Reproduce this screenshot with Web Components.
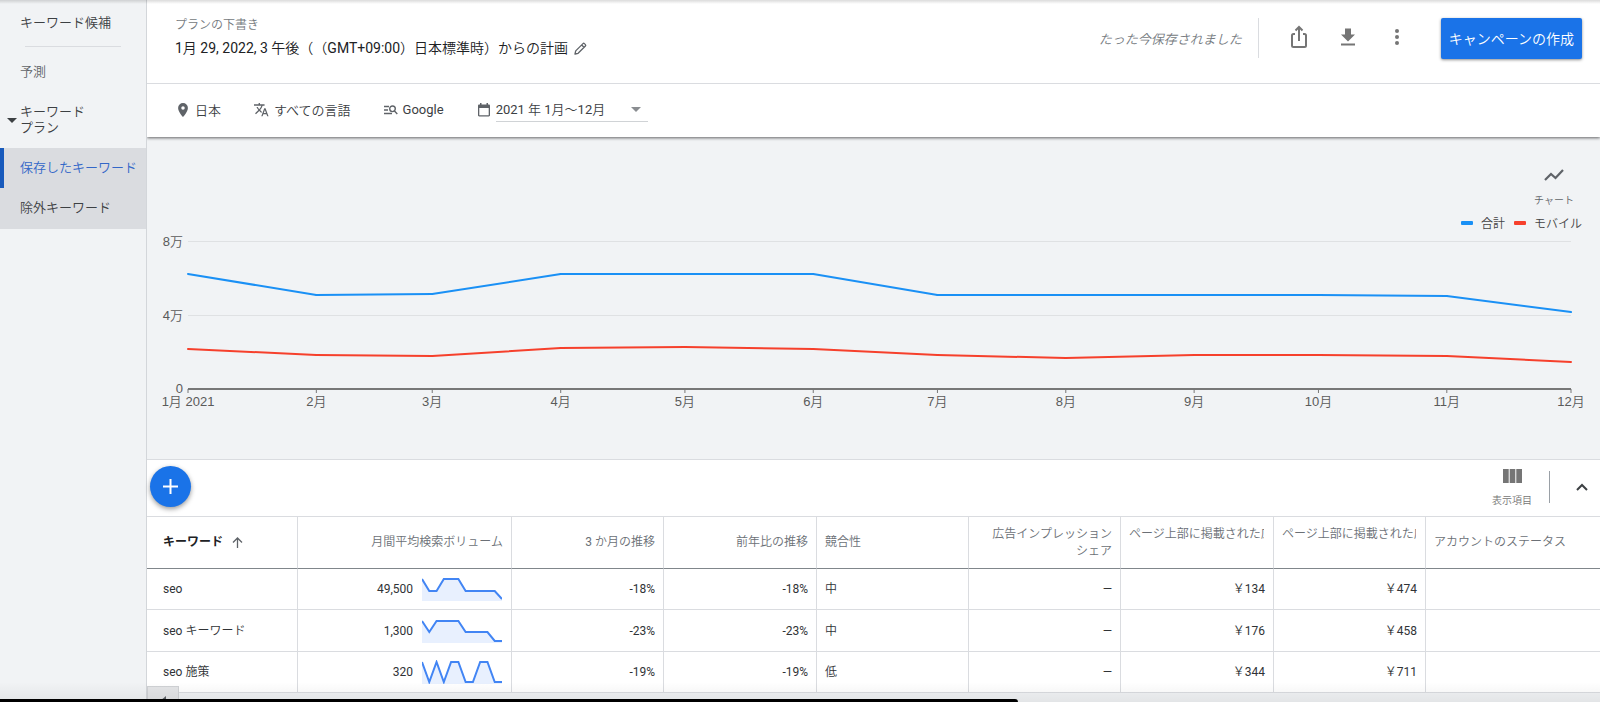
<!DOCTYPE html>
<html lang="ja">
<head>
<meta charset="utf-8">
<title>キーワード プラン</title>
<style>
html, body { margin: 0; height: 100%; }
body {
  font-family: Roboto, "Noto Sans CJK JP DemiLight", "Noto Sans CJK JP Light", "Noto Sans CJK JP", sans-serif;
  text-spacing-trim: space-all;
  font-size: 13px;
  color: #3c4043;
  background: #f1f3f5;
  overflow: hidden;
  --blue: #1a73e8;
  --panel: #f1f3f5;
  --line: #dadce0;
}
</style>
</head>
<body>
<planner-app></planner-app>
<script>
const RESET = `
  *, *::before, *::after { box-sizing: border-box; }
  button { font: inherit; color: inherit; background: none; border: 0; margin: 0; padding: 0; cursor: pointer; }
  a { color: inherit; text-decoration: none; }
`;
function define(name, css, html, extra) {
  const t = document.createElement('template');
  t.innerHTML = `<style>${RESET}${css}</style>${html}`;
  customElements.define(name, class extends HTMLElement {
    connectedCallback() {
      if (this.shadowRoot) return;
      const root = this.attachShadow({ mode: 'open' });
      root.append(t.content.cloneNode(true));
      if (extra) extra(this, root);
    }
  });
}

/* Icons */
const ICONS = {
  pencil: [13, 13, '<path d="M1 12l.7-3.1L9 1.6a1 1 0 0 1 1.400 0l1 1a1 1 0 0 1 0 1.400L4.100 11.300zM7.700 3l2.300 2.300" fill="none" stroke="currentColor" stroke-width="1.300" stroke-linejoin="round"/>'],
  share: [18, 23, '<path d="M5 8H3.500A1.500 1.500 0 0 0 2 9.500v10A1.500 1.500 0 0 0 3.500 21h11a1.500 1.500 0 0 0 1.500-1.500v-10A1.500 1.500 0 0 0 14.500 8H13M9 15V1.500M5.500 4.500L9 1l3.500 3.500" fill="none" stroke="currentColor" stroke-width="2"/>'],
  download: [14, 18, '<path d="M14 6.500h-4V.5H4v6H0l7 7zM0 15.500v2h14v-2z"/>'],
  more: [4, 18, '<circle cx="2" cy="3" r="2"/><circle cx="2" cy="9" r="2"/><circle cx="2" cy="15" r="2"/>'],
  pin: [10, 14, '<path d="M5 0a4.900 4.900 0 0 0-4.900 4.900C.1 8.500 5 14 5 14s4.900-5.500 4.900-9.100A4.900 4.900 0 0 0 5 0zm0 6.650a1.750 1.750 0 1 1 0-3.500 1.750 1.750 0 0 1 0 3.500z"/>'],
  translate: [15, 14, '<path transform="scale(.66) translate(-1 -2)" d="M12.870 15.070l-2.540-2.510.03-.03A17.520 17.520 0 0 0 14.070 6H17V4h-7V2H8v2H1v1.990h11.170C11.500 7.920 10.440 9.750 9 11.350 8.070 10.320 7.300 9.190 6.690 8h-2c.73 1.630 1.730 3.170 2.980 4.560l-5.090 5.020L4 19l5-5 3.110 3.110.76-2.040zM18.500 10h-2L12 22h2l1.120-3h4.750L21 22h2l-4.500-12zm-2.620 7l1.620-4.330L19.120 17h-3.240z"/>'],
  network: [14, 10, '<path d="M0 1.500h5M0 5h4M0 8.500h8M10 5.500l3.300 3.400" stroke="currentColor" stroke-width="1.400" fill="none"/><circle cx="8.500" cy="3.800" r="2.800" fill="none" stroke="currentColor" stroke-width="1.400"/>'],
  calendar: [12, 14, '<path d="M2 0h1.500v1.500h5V0H10v1.500h.8c.7 0 1.200.5 1.200 1.200v9.600c0 .7-.5 1.200-1.200 1.200H1.200C.5 13.500 0 13 0 12.300V2.700C0 2 .5 1.500 1.200 1.500H2zM1.300 5v7.200h9.400V5z"/>'],
  trend: [20, 12, '<path d="M1 11l6-6 4.500 4L19 1" fill="none" stroke="currentColor" stroke-width="2.200"/>'],
  plus: [15, 15, '<path d="M7.500 0v15M0 7.500h15" stroke="currentColor" stroke-width="2"/>'],
  columns: [19, 14, '<path d="M0 0h5.700v14H0zM6.700 0h5.600v14H6.700zM13.300 0H19v14h-5.700z"/>'],
  up: [12, 8, '<path d="M1 7l5-5 5 5" fill="none" stroke="currentColor" stroke-width="2"/>'],
  sort: [11, 11, '<path d="M5.500 11V1M1 5.500L5.500 1 10 5.500" fill="none" stroke="currentColor" stroke-width="1.300"/>'],
  caret: [10, 5, '<path d="M0 0h10L5 5z"/>'],
  left: [6, 10, '<path d="M6 0v10L0 5z"/>']
};
define('ui-icon', ':host{display:inline-flex;flex:none} svg{display:block;fill:currentColor;overflow:visible}', '', (el, root) => {
  const [w, h, body] = ICONS[el.getAttribute('name')];
  root.innerHTML += `<svg aria-hidden="true" width="${w}" height="${h}" viewBox="0 0 ${w} ${h}">${body}</svg>`;
});

/* Left navigation */
define('side-nav', `
  :host { display: block; background: var(--panel); border-right: 1px solid #d3d6da; line-height: 16px; }
  nav { display: flex; flex-direction: column; }
  a { display: flex; align-items: center; padding-left: 20px; white-space: nowrap; height: 40px; }
  .first { height: 46px; }
  hr { margin: 0 25px; border: 0; border-top: 1px solid var(--line); width: 96px; }
  .dim { color: #5f6368; height: 49px; }
  .group { height: 52px; padding: 0 0 4px 7px; gap: 4px; }
  .sub { background: var(--line); height: 81px; }
  .on { color: #3367c8; border-left: 4px solid #185abc; padding-left: 16px; }
`, `<nav>
  <a class="first" href="#ideas">キーワード候補</a><hr>
  <a class="dim" href="#forecast">予測</a>
  <a class="group" href="#plan"><ui-icon name="caret" style="width:9px"></ui-icon><span>キーワード<br>プラン</span></a>
  <div class="sub"><a class="on" href="#saved" aria-current="page">保存したキーワード</a><a href="#negative">除外キーワード</a></div>
</nav>`);

/* Plan title bar */
define('plan-header', `
  :host { display: flex; justify-content: space-between; height: 84px; background: #fff; border-bottom: 1px solid var(--line); padding: 0 18px 0 28px; }
  .title { padding-top: 16px; }
  p { margin: 0; font-size: 12px; line-height: 18px; color: #757a80; }
  h1 { margin: 0; font-size: 14px; font-weight: 400; line-height: 28px; color: #202124; display: flex; align-items: center; gap: 6px; white-space: nowrap; }
  h1 ui-icon { color: #5f6368; }
  .actions { display: flex; align-items: center; height: 40px; margin-top: 18px; color: #757575; }
  em { color: #757a80; }
  .bar { width: 1px; height: 40px; background: var(--line); margin: 0 28px 0 16px; }
  .icons { display: flex; align-items: center; gap: 25px; margin-right: 32px; padding-bottom: 2px; }
  .icons button { display: flex; justify-content: center; width: 24px; }
  .create { background: var(--blue); color: #fff; font-size: 14px; height: 41px; padding: 0 8px; border-radius: 2px; box-shadow: 0 1px 3px rgba(0,0,0,.45); }
`, `<div class="title"><p>プランの下書き</p><h1>1月 29, 2022, 3 午後（（GMT+09:00）日本標準時）からの計画<ui-icon name="pencil"></ui-icon></h1></div>
<div class="actions"><em>たった今保存されました</em><span class="bar"></span>
  <span class="icons"><button aria-label="共有"><ui-icon name="share"></ui-icon></button><button aria-label="ダウンロード"><ui-icon name="download"></ui-icon></button><button aria-label="その他"><ui-icon name="more"></ui-icon></button></span>
  <button class="create">キャンペーンの作成</button></div>`);

/* Location, language, network and date filters */
define('plan-filters', `
  :host { display: flex; align-items: center; gap: 33px; height: 53px; padding: 0 31px 2px; background: #fff; box-shadow: 0 1px 3px rgba(0,0,0,.6); clip-path: inset(0 0 -6px 0); position: relative; }
  button, label { display: flex; align-items: center; gap: 5px; white-space: nowrap; color: #5f6368; }
  .place { gap: 7px; }
  .text { color: #3c4043; }
  .date { position: relative; gap: 6px; margin-left: 1px; }
  select { appearance: none; font: inherit; color: #3c4043; background: none; border: 0; border-bottom: 1px solid #d0d3d6; border-radius: 0; padding: 0; width: 152px; height: 24px; outline: 0; }
  .date ui-icon:last-child { position: absolute; right: 7px; color: #8a8d91; pointer-events: none; }
`, `<button class="place"><ui-icon name="pin"></ui-icon><span class="text">日本</span></button>
<button><ui-icon name="translate"></ui-icon><span class="text">すべての言語</span></button>
<button><ui-icon name="network"></ui-icon><span class="text">Google</span></button>
<label class="date"><ui-icon name="calendar"></ui-icon><select aria-label="期間"><option>2021 年 1月～12月</option></select><ui-icon name="caret"></ui-icon></label>`);

/* Search volume chart */
define('trend-chart', `
  :host { display: block; height: 323px; padding: 32px 29px 0 41px; border-bottom: 1px solid var(--line); }
  .mode { display: flex; flex-direction: column; align-items: center; gap: 12px; width: 40px; margin: 0 -3px 0 auto; font-size: 10px; line-height: 16px; color: #5f6368; white-space: nowrap; }
  ul { display: flex; justify-content: flex-end; gap: 9px; margin: 6px -11px 8px 0; padding: 0; list-style: none; font-size: 12px; line-height: 18px; color: #444; }
  li { display: flex; align-items: center; gap: 8px; }
  i { width: 12px; height: 4px; border-radius: 1px; background: #1a90f5; margin-bottom: 2px; }
  i.m { background: #f6402c; }
  svg { display: block; width: 100%; height: 170px; overflow: visible; font: 13px "Liberation Sans", "Noto Sans CJK JP DemiLight", "Noto Sans CJK JP Light", "Noto Sans CJK JP", sans-serif; fill: #5a5a5a; }
`, `<button class="mode"><ui-icon name="trend"></ui-icon>チャート</button>
<ul><li><i></i>合計</li><li><i class="m"></i>モバイル</li></ul>
<svg role="img" aria-label="検索ボリュームの推移"></svg>`, (el, root) => {
  const days = [0, 31, 59, 90, 120, 151, 181, 212, 243, 273, 304, 334];
  const total = [33, 54, 53, 33, 33, 33, 54, 54, 54, 54, 55, 71];
  const mobile = [108, 114, 115, 107, 106, 108, 114, 117, 114, 114, 115, 121];
  const x = i => (days[i] / 334 * 100).toFixed(2) + '%';
  const hline = (y, c) => `<line x1="0" x2="100%" y1="${y}" y2="${y}" stroke="${c}"/>`;
  const series = (v, c) => v.slice(1).map((y, i) =>
    `<line x1="${x(i)}" y1="${v[i]}" x2="${x(i + 1)}" y2="${y}" stroke="${c}" stroke-width="2" stroke-linecap="round"/>`).join('');
  let s = hline(.5, '#dfe1e3') + hline(74.5, '#dfe1e3') + `<line x1="0" x2="100%" y1="148" y2="148" stroke="#777" stroke-width="2"/>`;
  [['8万', 5], ['4万', 79], ['0', 152]].forEach(([t, y]) => s += `<text x="-5" y="${y}" text-anchor="end">${t}</text>`);
  days.forEach((d, i) => s += `<line x1="${x(i)}" x2="${x(i)}" y1="148" y2="152" stroke="#777"/><text x="${x(i)}" y="165" text-anchor="middle">${i + 1}月${i ? '' : ' 2021'}</text>`);
  root.querySelector('svg').innerHTML = s + series(total, '#1a90f5') + series(mobile, '#f6402c');
});

/* Toolbar above the table */
define('table-toolbar', `
  :host { display: flex; align-items: center; justify-content: space-between; height: 57px; background: #fff; border-bottom: 1px solid var(--line); padding: 0 12px 3px 3px; }
  .add { width: 41px; height: 41px; border-radius: 50%; background: var(--blue); color: #fff; display: flex; align-items: center; justify-content: center; box-shadow: 0 2px 5px rgba(0,0,0,.4); }
  .right { display: flex; align-items: center; }
  .cols { display: flex; flex-direction: column; align-items: center; gap: 10px; padding-top: 5px; font-size: 10px; line-height: 16px; color: #757575; }
  .bar { width: 1px; height: 32px; background: #9aa0a6; margin: 0 26px 0 17px; }
`, `<button class="add" aria-label="キーワードを追加"><ui-icon name="plus"></ui-icon></button>
<div class="right"><button class="cols"><ui-icon name="columns"></ui-icon>表示項目</button><span class="bar"></span><button aria-label="折りたたむ"><ui-icon name="up"></ui-icon></button></div>`);

/* Twelve-month sparkline */
define('spark-line', ':host{display:block;width:80px;height:24px} svg{display:block}', '', (el, root) => {
  const v = el.getAttribute('values').split(',');
  const p = v.map((y, i) => `${(i * 80 / 11).toFixed(2)},${y}`).join(' ');
  root.innerHTML += `<svg width="80" height="24" aria-hidden="true"><polygon points="0,24 ${p} 80,24" fill="#e8f0fe"/><polyline points="${p}" fill="none" stroke="#4285f4" stroke-width="2"/></svg>`;
});

/* Keyword table */
const ROWS = [
  ['seo', '49,500', '2,14,14,2,2,2,14,14,14,14,14,22', '-18%', '-18%', '中', '￥134', '￥474'],
  ['seo キーワード', '1,300', '2,13,2,2,2,2,13,13,13,13,22,22', '-23%', '-23%', '中', '￥176', '￥458'],
  ['seo 施策', '320', '2,22,2,22,2,2,22,22,2,2,22,22', '-19%', '-19%', '低', '￥344', '￥711']
];
define('keyword-table', `
  :host { display: block; background: #fff; font-size: 12px; }
  table { width: 100%; table-layout: fixed; border-collapse: separate; border-spacing: 0; }
  th, td { padding: 0 8px; border-right: 1px solid var(--line); text-align: right; vertical-align: middle; }
  th:last-child, td:last-child { border-right: 0; }
  th { height: 52px; font-weight: 400; line-height: 17px; color: #6b7076; border-bottom: 1px solid #80868b; }
  td { height: 42px; border-bottom: 1px solid var(--line); color: #303336; line-height: 16px; }
  tbody tr:nth-child(odd) td { height: 41px; }
  .l { text-align: left; }
  th:first-child, td:first-child { padding-left: 16px; }
  th button { display: flex; align-items: center; gap: 9px; font-family: Roboto, "Noto Sans CJK JP", sans-serif; font-weight: 700; color: #202124; }
  th ui-icon { color: #5f6368; }
  .clip { height: 34px; margin-right: 1px; overflow: hidden; white-space: nowrap; text-align: left; }
  .vol { display: flex; align-items: center; justify-content: flex-end; gap: 9px; padding-right: 1px; }
`, `<table>
  <colgroup><col style="width:151px"><col style="width:214px"><col style="width:152px"><col style="width:153px"><col style="width:152px"><col style="width:152px"><col style="width:153px"><col style="width:152px"><col></colgroup>
  <thead><tr><th class="l"><button>キーワード<ui-icon name="sort"></ui-icon></button></th><th>月間平均検索ボリューム</th><th>3 か月の推移</th><th>前年比の推移</th><th class="l">競合性</th><th>広告インプレッション<br>シェア</th><th><div class="clip">ページ上部に掲載された広告</div></th><th><div class="clip">ページ上部に掲載された広告</div></th><th class="l">アカウントのステータス</th></tr></thead>
  <tbody>${ROWS.map(r => `<tr><td class="l">${r[0]}</td><td><div class="vol">${r[1]}<spark-line values="${r[2]}"></spark-line></div></td><td>${r[3]}</td><td>${r[4]}</td><td class="l">${r[5]}</td><td>—</td><td>${r[6]}</td><td>${r[7]}</td><td></td></tr>`).join('')}</tbody>
</table>`);

/* Page frame */
define('planner-app', `
  :host { display: grid; grid-template-columns: 147px 1fr; height: 100vh; position: relative; overflow: hidden; }
  :host::before { content: ""; position: absolute; z-index: 3; inset: 0 0 auto; height: 4px; background: linear-gradient(rgba(0,0,0,.14), transparent); }
  main { min-width: 0; }
  .shade { position: absolute; inset: auto 0 0; height: 20px; background: linear-gradient(transparent, rgba(0,0,0,.06)); }
  .scroll { position: absolute; left: 147px; bottom: 0; width: 32px; height: 16px; background: #e4e5e7; border: 1px solid #cfd1d4; display: flex; justify-content: center; padding-top: 9px; color: #5f6368; }
  .dock { position: absolute; left: 0; bottom: 0; width: 1018px; height: 3px; background: #000; border-top-right-radius: 3px; }
`, `<side-nav></side-nav>
<main><plan-header></plan-header><plan-filters></plan-filters><trend-chart></trend-chart><table-toolbar></table-toolbar><keyword-table></keyword-table></main>
<button class="scroll" aria-label="左へスクロール"><ui-icon name="left"></ui-icon></button>
<div class="shade"></div><div class="dock"></div>`);
</script>
</body>
</html>
